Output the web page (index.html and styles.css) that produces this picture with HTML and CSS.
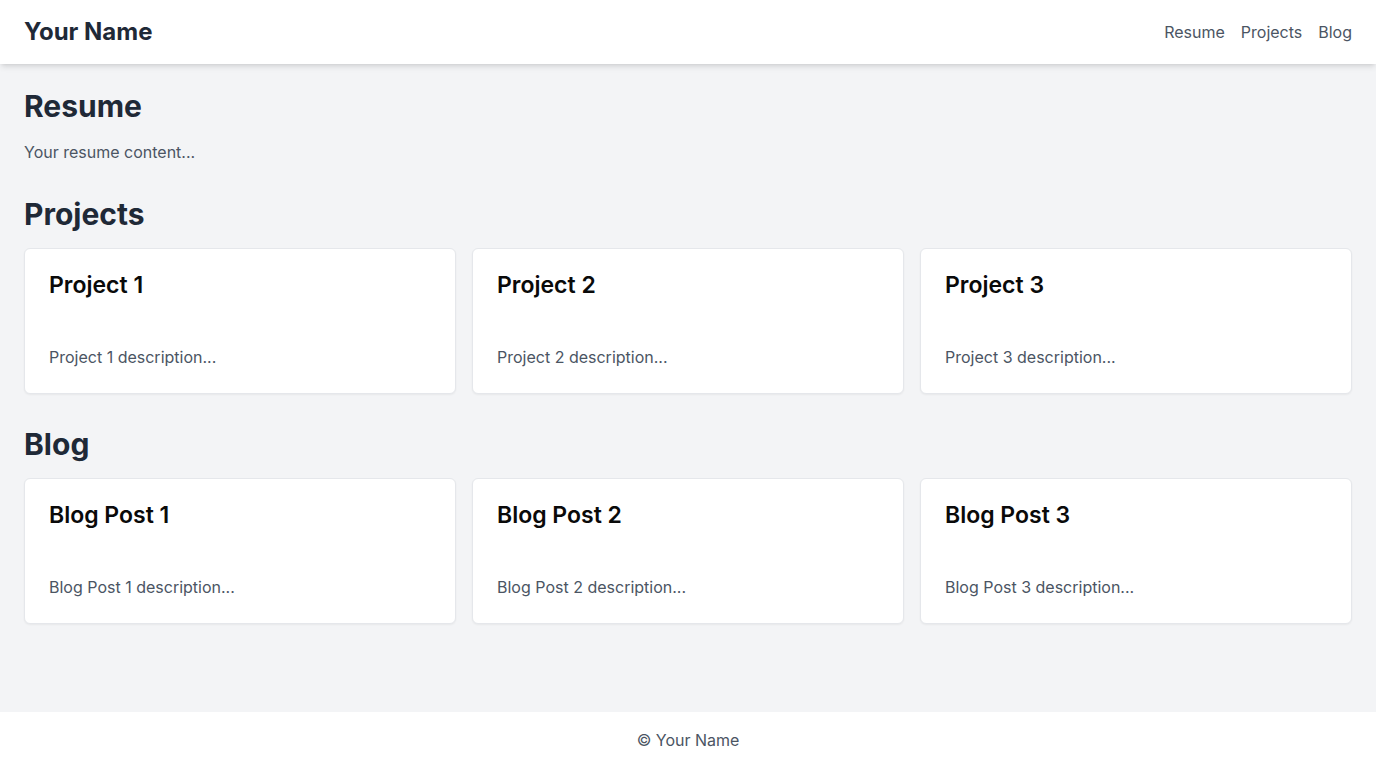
FILE: index.html
```html
<!DOCTYPE html>
<html lang="en">
<head>
<meta charset="utf-8">
<title>Your Name</title>
<link rel="stylesheet" href="styles.css">
</head>
<body>
<div class="page">
  <header class="site-header">
    <div class="brand">Your Name</div>
    <nav class="nav">
      <a href="#resume">Resume</a>
      <a href="#projects">Projects</a>
      <a href="#blog">Blog</a>
    </nav>
  </header>
  <main class="main">
    <section class="section" id="resume">
      <h2 class="section-title">Resume</h2>
      <p class="text">Your resume content...</p>
    </section>
    <section class="section" id="projects">
      <h2 class="section-title">Projects</h2>
      <div class="grid">
        <div class="card"><h3 class="card-title">Project 1</h3><p class="text">Project 1 description...</p></div>
        <div class="card"><h3 class="card-title">Project 2</h3><p class="text">Project 2 description...</p></div>
        <div class="card"><h3 class="card-title">Project 3</h3><p class="text">Project 3 description...</p></div>
      </div>
    </section>
    <section class="section" id="blog">
      <h2 class="section-title">Blog</h2>
      <div class="grid">
        <div class="card"><h3 class="card-title">Blog Post 1</h3><p class="text">Blog Post 1 description...</p></div>
        <div class="card"><h3 class="card-title">Blog Post 2</h3><p class="text">Blog Post 2 description...</p></div>
        <div class="card"><h3 class="card-title">Blog Post 3</h3><p class="text">Blog Post 3 description...</p></div>
      </div>
    </section>
  </main>
  <footer class="site-footer">© Your Name</footer>
</div>
</body>
</html>
```
FILE: styles.css
```css
* { box-sizing: border-box; }
html, body { margin: 0; padding: 0; }
body {
  font-family: Inter, "Noto Sans", sans-serif;
  background: #f3f4f6;
  color: #1f2937;
  font-size: 16px;
  line-height: 24px;
}
.page {
  min-height: 100vh;
  display: flex;
  flex-direction: column;
}
.site-header {
  background: #fff;
  height: 64px;
  padding: 0 24px;
  display: flex;
  align-items: center;
  justify-content: space-between;
  box-shadow: 0 4px 6px -1px rgba(0,0,0,0.1), 0 2px 4px -2px rgba(0,0,0,0.1);
  position: relative;
  z-index: 1;
}
.brand {
  font-size: 24px;
  line-height: 32px;
  font-weight: 700;
  color: #1f2937;
}
.nav { display: flex; gap: 16px; }
.nav a {
  color: #4b5563;
  text-decoration: none;
  font-size: 16px;
  line-height: 24px;
}
.main {
  flex: 1;
  padding: 24px;
}
.section { margin-bottom: 32px; }
.section:last-child { margin-bottom: 0; }
.section-title {
  margin: 0 0 16px;
  font-size: 30px;
  line-height: 36px;
  font-weight: 700;
  color: #1f2937;
}
.text {
  margin: 0;
  color: #4b5563;
  font-size: 16px;
  line-height: 24px;
}
.grid {
  display: grid;
  grid-template-columns: repeat(3, 1fr);
  gap: 16px;
}
.card {
  background: #fff;
  border: 1px solid #e5e7eb;
  border-radius: 6px;
  padding: 24px;
  box-shadow: 0 1px 2px 0 rgba(0,0,0,0.05);
}
.card-title {
  margin: 0 0 48px;
  font-size: 23px;
  line-height: 24px;
  font-weight: 600;
  color: #0a0a0a;
}
.site-footer {
  background: #fff;
  padding: 16px;
  text-align: center;
  color: #4b5563;
  font-size: 16px;
  line-height: 24px;
}
```
